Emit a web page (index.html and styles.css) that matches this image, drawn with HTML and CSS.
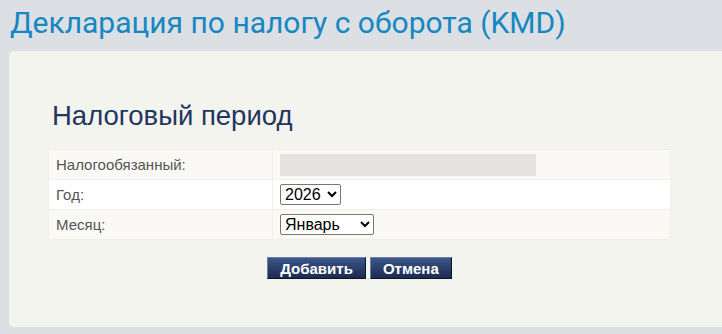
FILE: index.html
```html
<!DOCTYPE html>
<html lang="ru">

<head>
  <meta charset="UTF-8">
  <meta name="viewport" content="width=device-width, initial-scale=1.0">
  <title>Декларация по налогу с оборота (KMD)</title>

  <link rel="stylesheet" href="styles.css">
</head>

<body>
  <h1 class="page-title">Декларация по налогу с оборота (KMD)</h1>

  <!-- 
    Form for choosing the tax period
  -->
  <div class="panel">
    <h2 class="panel-title">Налоговый период</h2>

    <table class="period">
      <tr>
        <td class="label">Налогообязанный:</td>
        <td><div class="payer"></div></td>
      </tr>
      <tr>
        <td class="label">Год:</td>
        <td>
          <select class="year" name="year">
            <option>2026</option>
            <option>2025</option>
            <option>2024</option>
          </select>
        </td>
      </tr>
      <tr>
        <td class="label">Месяц:</td>
        <td>
          <select class="month" name="month">
            <option>Январь</option>
            <option>Февраль</option>
            <option>Март</option>
            <option>Апрель</option>
            <option>Май</option>
            <option>Июнь</option>
            <option>Июль</option>
            <option>Август</option>
            <option>Сентябрь</option>
            <option>Октябрь</option>
            <option>Ноябрь</option>
            <option>Декабрь</option>
          </select>
        </td>
      </tr>
    </table>

    <div class="actions">
      <button class="btn" type="submit">Добавить</button>
      <button class="btn" type="button">Отмена</button>
    </div>
  </div>
</body>

</html>
```

FILE: styles.css
```css
body {
  margin: 0;
  background-color: #dcdfe3;
  font-family: "Liberation Sans", Arial, sans-serif;
}

/* Page heading */
.page-title {
  margin: 0;
  padding: 5px 10px 0;
  font-family: Roboto, "Liberation Sans", sans-serif;
  font-size: 30px;
  font-weight: 400;
  line-height: 36px;
  color: #1587c2;
}

/* Main panel */
.panel {
  margin: 10px 0 0 9px;
  padding: 49px 0 49px 39px;
  height: 178px;
  background-color: #f4f4ee;
  border-radius: 5px 0 0 5px;
}

.panel-title {
  margin: 0 0 17px;
  padding-left: 4px;
  font-size: 27.5px;
  font-weight: 400;
  line-height: 32px;
  color: #1f3660;
}

/* Period table */
table.period {
  width: 623px;
  border-collapse: collapse;
  border: 1px solid #f9f8f3;
}

table.period td {
  height: 29px;
  padding: 0 7px;
  border: 1px solid #f0efe9;
  background-color: #faf9f5;
  font-size: 15px;
  vertical-align: middle;
}

table.period tr:nth-child(even) td {
  background-color: #ffffff;
}

table.period td.label {
  width: 209px;
  color: #555555;
}

.payer {
  width: 256px;
  height: 22px;
  background-color: #e4e3df;
}

select {
  height: 21px;
  padding: 0;
  font-family: "Liberation Sans", Arial, sans-serif;
  font-size: 16px;
  color: #000000;
  background-color: #ffffff;
  border: 1px solid #767676;
  border-radius: 2px;
}

select.year {
  width: 61px;
}

select.month {
  width: 94px;
}

/* Buttons */
.actions {
  display: flex;
  justify-content: center;
  gap: 4px;
  width: 623px;
  margin-top: 17px;
}

.btn {
  height: 22px;
  padding: 0 12px;
  font-family: "Liberation Sans", Arial, sans-serif;
  font-size: 15px;
  font-weight: bold;
  color: #ffffff;
  background: linear-gradient(#3b5688, #1b2b51);
  border: 1px solid #0d1428;
  border-top-color: #6d81a8;
  border-left-color: #6d81a8;
  border-radius: 0;
  cursor: pointer;
}
```
